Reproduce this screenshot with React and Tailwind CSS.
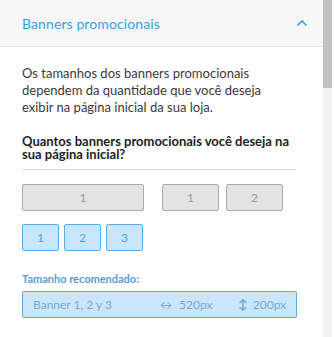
export default function App() {
  const rowA = ['1', '2', '3']

  return (
    <div className="flex w-[335px] h-[337px] overflow-hidden bg-white" style={{ fontFamily: 'Lato, "Noto Sans", sans-serif' }}>
      <div className="w-[323px] flex flex-col">
        <div className="h-[47px] shrink-0 bg-[#f7f7f7] border-b border-[#e6e6e6] flex items-center justify-between pl-[22px] pr-[15px]">
          <span className="text-[14px] text-[#34a2e4] tracking-[0.1px]">Banners promocionais</span>
          <svg width="12" height="8" viewBox="0 0 12 8" className="mb-[1px]">
            <path d="M1.5 6.5 L6 2 L10.5 6.5" fill="none" stroke="#34a2e4" strokeWidth="1.6" />
          </svg>
        </div>

        <div className="px-[22px] pt-[18px]">
          <p className="text-[13px] leading-[17px] text-[#3a3a3a] pr-[22px]">
            Os tamanhos dos banners promocionais dependem da quantidade que você deseja exibir na página inicial da sua loja.
          </p>
          <h3 className="mt-[19px] text-[13px] leading-[13px] font-bold text-[#222] pb-[8px] border-b border-[#dcdcdc] mr-[5px]">
            Quantos banners promocionais você deseja na sua página inicial?
          </h3>

          <div className="flex mt-[14px] gap-[18px]">
            <button className="w-[122px] h-[27px] rounded-[2px] border border-[#aaaaaa] bg-[#e3e3e3] text-[12px] text-[#9a9a9a]">1</button>
            <div className="flex gap-[7px]">
              <button className="w-[57px] h-[27px] rounded-[2px] border border-[#aaaaaa] bg-[#e3e3e3] text-[12px] text-[#9a9a9a]">1</button>
              <button className="w-[57px] h-[27px] rounded-[2px] border border-[#aaaaaa] bg-[#e3e3e3] text-[12px] text-[#9a9a9a]">2</button>
            </div>
          </div>

          <div className="flex mt-[13px] gap-[5px]">
            {rowA.map((n) => (
              <button key={n} className="w-[37px] h-[27px] rounded-[2px] border border-[#5aaee8] bg-[#c8e7fd] text-[12px] text-[#4fa3df]">{n}</button>
            ))}
          </div>

          <div className="mt-[21px] text-[11px] leading-[13px] font-bold text-[#5b9bdc]">Tamanho recomendado:</div>
          <div className="mt-[6px] w-[275px] h-[27px] rounded-[2px] border border-[#5aaee8] bg-[#c8e7fd] flex items-center pl-[10px] text-[12px] text-[#7ba6d3]">
            <span className="w-[127px]">Banner 1, 2 y 3</span>
            <span className="flex items-center w-[78px]">
              <span className="text-[12px] mr-[7px]">↔</span>520px
            </span>
            <span className="flex items-center">
              <span className="text-[13px] font-bold mr-[5px]">↕</span>200px
            </span>
          </div>
        </div>
      </div>

      <div className="w-[9px] bg-[#f1f1f1] flex flex-col">
        <div className="h-[88px] bg-[#c1c1c1]" />
      </div>
      <div className="w-[3px] bg-white" />
    </div>
  )
}
